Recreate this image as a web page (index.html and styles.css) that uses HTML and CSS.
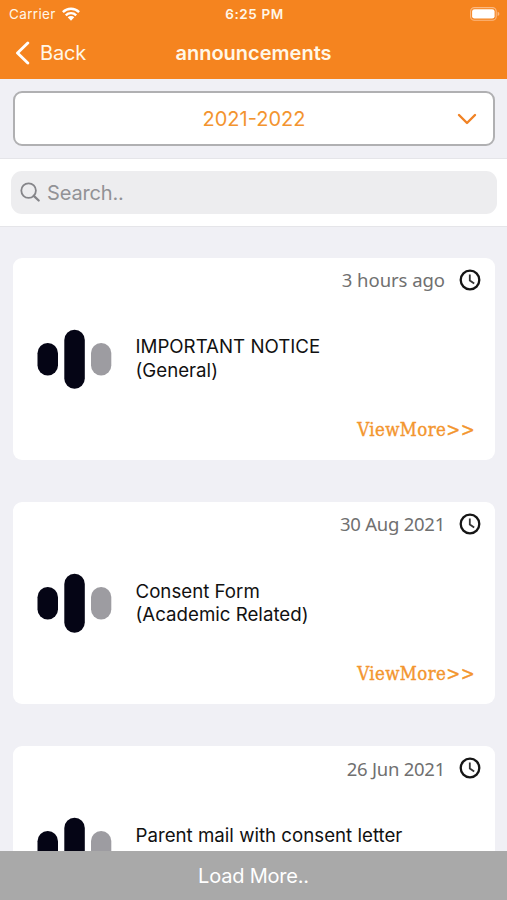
FILE: index.html
```html
<!DOCTYPE html>
<html lang="en">
<head>
<meta charset="utf-8">
<meta name="viewport" content="width=device-width, initial-scale=1">
<title>announcements</title>
<link rel="stylesheet" href="styles.css">
</head>
<body>
<svg width="0" height="0" class="defs" aria-hidden="true">
  <symbol id="clock" viewBox="0 0 22 22"><circle cx="11" cy="11" r="9.3" fill="none" stroke="#151515" stroke-width="2.3"/><path d="M10.8 5.4v6l4.4 3" fill="none" stroke="#333" stroke-width="1.8"/></symbol>
  <symbol id="bars" viewBox="0 0 75 60"><rect x=".5" y="14" width="20.5" height="32.5" rx="10.2" fill="#050515"/><rect x="27.3" y=".7" width="20.5" height="59" rx="10.2" fill="#050515"/><rect x="54" y="14" width="20.3" height="32.5" rx="10.1" fill="#9d9ca1"/></symbol>
</svg>
<div class="app">
  <header class="top">
    <div class="status">
      <div class="carrier"><span>Carrier</span>
        <svg width="18" height="14" viewBox="0 0 18 14"><g fill="none" stroke="#fff" stroke-width="2.4"><path d="M.9 5.1a11.6 11.6 0 0 1 16.2 0"/><path d="M3.8 8.3a7.4 7.4 0 0 1 10.4 0"/></g><path d="M5.7 10.3a4.7 4.7 0 0 1 6.6 0L9 13.7z" fill="#fff"/></svg>
      </div>
      <time>6:25 PM</time>
      <svg class="battery" width="30" height="14" viewBox="0 0 30 14"><rect x=".6" y=".6" width="25.6" height="12.6" rx="3.8" fill="none" stroke="#fbb983" stroke-width="1.1"/><rect x="2.1" y="2.2" width="22.5" height="9.4" rx="2.4" fill="#fff"/><path d="M27.6 4.8q1.8.6 1.8 2.1t-1.8 2.1z" fill="#fbb983"/></svg>
    </div>
    <nav class="nav">
      <a class="back"><svg width="15" height="24" viewBox="0 0 15 24"><path d="M12.8 2 2.5 12l10.3 10" fill="none" stroke="#fff" stroke-width="2.9" stroke-linecap="round" stroke-linejoin="round"/></svg><span>Back</span></a>
      <h1>announcements</h1>
    </nav>
  </header>
  <section class="year">
    <div class="select"><span>2021-2022</span><svg width="20" height="13" viewBox="0 0 20 13"><path d="m2 3 8 8 8-8" fill="none" stroke="#f08224" stroke-width="2.4" stroke-linecap="round" stroke-linejoin="round"/></svg></div>
  </section>
  <section class="search">
    <div class="field"><svg width="21" height="21" viewBox="0 0 21 21"><g fill="none" stroke="#858589" stroke-width="1.8"><circle cx="8.6" cy="8.6" r="7.3"/><path d="m13.8 13.8 4.9 4.7" stroke-width="2.3" stroke-linecap="round"/></g></svg><span>Search..</span></div>
  </section>
  <main class="list">
    <article class="card">
      <div class="meta"><span class="date ago">3 hours ago</span><svg class="clock"><use href="#clock"/></svg></div>
      <div class="body"><svg class="bars"><use href="#bars"/></svg><div class="title"><div>IMPORTANT NOTICE</div><div>(General)</div></div></div>
      <a class="more">ViewMore&gt;&gt;</a>
    </article>
    <article class="card">
      <div class="meta"><span class="date">30 Aug 2021</span><svg class="clock"><use href="#clock"/></svg></div>
      <div class="body"><svg class="bars"><use href="#bars"/></svg><div class="title"><div>Consent Form</div><div>(Academic Related)</div></div></div>
      <a class="more">ViewMore&gt;&gt;</a>
    </article>
    <article class="card">
      <div class="meta"><span class="date">26 Jun 2021</span><svg class="clock"><use href="#clock"/></svg></div>
      <div class="body"><svg class="bars"><use href="#bars"/></svg><div class="title"><div>Parent mail with consent letter</div><div>&nbsp;</div></div></div>
    </article>
  </main>
  <footer class="load">Load More..</footer>
</div>
</body>
</html>
```
FILE: styles.css
```css
* { box-sizing: border-box; }
body { margin: 0; font-family: Inter, "Liberation Sans", sans-serif; }
svg { display: block; flex: none; }
.defs { display: none; }
.app { height: 900px; width: 507px; display: flex; flex-direction: column; background: #f0f0f5; overflow: hidden; }
.top { height: 79px; flex: none; background: #f5841f; color: #fff7e8; }
.status { height: 27px; display: grid; grid-template-columns: 1fr auto 1fr; align-items: center; padding: 0 7px 0 9px; font-size: 13px; }
.carrier { display: flex; align-items: center; gap: 6px; font-size: 13.5px; letter-spacing: .35px; }
.status time { font-weight: 600; font-size: 13.5px; letter-spacing: .6px; }
.battery { justify-self: end; }
.nav { height: 52px; display: grid; grid-template-columns: 1fr auto 1fr; align-items: center; padding: 0 15px; }
.back { display: flex; align-items: center; gap: 10px; font-size: 20px; letter-spacing: -.2px; }
.nav h1 { margin: 0; font-size: 20px; font-weight: 600; }
.year { height: 80px; flex: none; padding: 12px 12px 0 13px; border-bottom: 1px solid #e5e5e9; }
.select { height: 55px; border: 2px solid #b0b0b2; border-radius: 9px; background: #fff; display: grid; grid-template-columns: 1fr auto 1fr; align-items: center; color: #f3942f; font-size: 20px; }
.select span { grid-column: 2; }
.select svg { justify-self: end; margin-right: 16px; }
.search { height: 68px; flex: none; padding: 12px 10px 0 11px; background: #fff; border-bottom: 1px solid #e5e5e9; }
.field { height: 43px; border-radius: 11px; background: #ededef; display: flex; align-items: center; gap: 6px; padding-left: 9px; color: #929296; font-size: 20px; letter-spacing: -.15px; }
.field span { padding-top: 1px; }
.list { flex: 1; min-height: 0; overflow: hidden; padding: 30.5px 12px 0 12.5px; display: flex; flex-direction: column; gap: 42px; }
.card { flex: none; height: 202.3px; background: #fff; border-radius: 9px; display: flex; flex-direction: column; }
.meta { height: 44px; display: flex; justify-content: flex-end; align-items: center; gap: 14px; padding-right: 14px; }
.date { font-family: "Noto Sans", sans-serif; font-size: 18.5px; letter-spacing: -.25px; color: #707070; }
.ago { letter-spacing: -.05px; }
.clock { width: 22px; height: 22px; }
.body { height: 114px; display: flex; align-items: center; gap: 23.5px; padding-left: 24.5px; }
.bars { width: 75px; height: 60px; }
.title { font-size: 18.7px; line-height: 23.3px; color: #111; white-space: nowrap; }
.more { align-self: flex-end; margin-right: 20px; font-family: "DejaVu Serif Condensed", "DejaVu Serif", serif; font-size: 18.5px; letter-spacing: .4px; line-height: 28px; color: #f3962f; -webkit-text-stroke: .35px #f3962f; }
.load { height: 49px; flex: none; padding-top: 1px; background: #a9a9a9; color: #fff; display: flex; align-items: center; justify-content: center; font-size: 20px; letter-spacing: -.2px; }
```
